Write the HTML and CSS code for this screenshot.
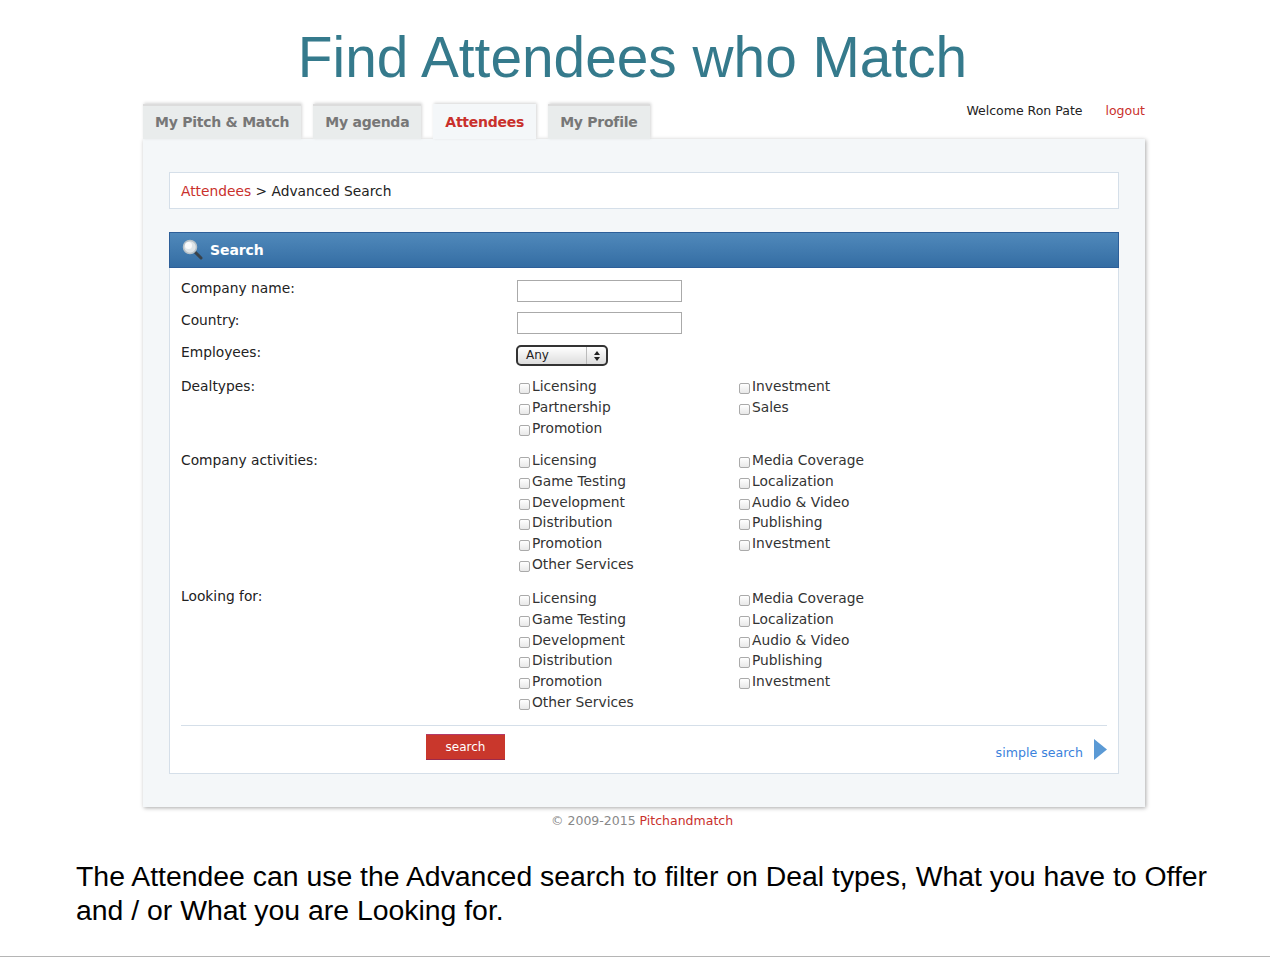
FILE: index.html
```html
<!DOCTYPE html>
<html lang="en">
<head>
<meta charset="utf-8">
<title>Find Attendees who Match</title>
<link rel="stylesheet" href="styles.css">
</head>
<body>
<div class="slide">
  <h1 class="title">Find Attendees who Match</h1>
  <div class="app">
    <div class="topbar">
      <nav class="tabs">
        <a class="tab">My Pitch &amp; Match</a>
        <a class="tab">My agenda</a>
        <a class="tab active">Attendees</a>
        <a class="tab">My Profile</a>
      </nav>
      <div class="user"><span>Welcome Ron Pate</span><a class="red">logout</a></div>
    </div>
    <div class="panel">
      <div class="crumbs"><a class="red">Attendees</a> &gt; Advanced Search</div>
      <div class="box">
        <div class="box-head">
          <svg class="mag" width="24" height="24" viewBox="0 0 24 24" aria-hidden="true">
            <line x1="14" y1="14" x2="20" y2="20" stroke="#39424a" stroke-width="3" stroke-linecap="round"/>
            <circle cx="9" cy="9" r="6.500" fill="#dfe5e8" stroke="#b9c2c8" stroke-width="1.500"/>
            <circle cx="7.500" cy="7.500" r="3.500" fill="#fff" opacity=".8"/>
          </svg>
          <span>Search</span>
        </div>
        <div class="form">
          <div class="row r-input"><label>Company name:</label><input class="text" type="text"></div>
          <div class="row r-input"><label>Country:</label><input class="text" type="text"></div>
          <div class="row r-select"><label>Employees:</label>
            <div class="select"><span class="sel-val">Any</span><span class="sel-arrows"><svg width="6" height="10" viewBox="0 0 6 10" aria-hidden="true"><path d="M3 0 6 4H0zM3 10 0 6h6z" fill="#222"/></svg></span></div>
          </div>
          <div class="row r-deal"><label>Dealtypes:</label>
            <div class="checks">
              <div class="col">
                <div class="opt"><i class="cb"></i>Licensing</div>
                <div class="opt"><i class="cb"></i>Partnership</div>
                <div class="opt"><i class="cb"></i>Promotion</div>
              </div>
              <div class="col">
                <div class="opt"><i class="cb"></i>Investment</div>
                <div class="opt"><i class="cb"></i>Sales</div>
              </div>
            </div>
          </div>
          <div class="row r-act"><label>Company activities:</label>
            <div class="checks">
              <div class="col">
                <div class="opt"><i class="cb"></i>Licensing</div>
                <div class="opt"><i class="cb"></i>Game Testing</div>
                <div class="opt"><i class="cb"></i>Development</div>
                <div class="opt"><i class="cb"></i>Distribution</div>
                <div class="opt"><i class="cb"></i>Promotion</div>
                <div class="opt"><i class="cb"></i>Other Services</div>
              </div>
              <div class="col">
                <div class="opt"><i class="cb"></i>Media Coverage</div>
                <div class="opt"><i class="cb"></i>Localization</div>
                <div class="opt"><i class="cb"></i>Audio &amp; Video</div>
                <div class="opt"><i class="cb"></i>Publishing</div>
                <div class="opt"><i class="cb"></i>Investment</div>
              </div>
            </div>
          </div>
          <div class="row r-look"><label>Looking for:</label>
            <div class="checks">
              <div class="col">
                <div class="opt"><i class="cb"></i>Licensing</div>
                <div class="opt"><i class="cb"></i>Game Testing</div>
                <div class="opt"><i class="cb"></i>Development</div>
                <div class="opt"><i class="cb"></i>Distribution</div>
                <div class="opt"><i class="cb"></i>Promotion</div>
                <div class="opt"><i class="cb"></i>Other Services</div>
              </div>
              <div class="col">
                <div class="opt"><i class="cb"></i>Media Coverage</div>
                <div class="opt"><i class="cb"></i>Localization</div>
                <div class="opt"><i class="cb"></i>Audio &amp; Video</div>
                <div class="opt"><i class="cb"></i>Publishing</div>
                <div class="opt"><i class="cb"></i>Investment</div>
              </div>
            </div>
          </div>
          <div class="actions">
            <button class="btn" type="button">search</button>
            <a class="simple">simple search</a>
            <svg class="arrow" width="13" height="21" viewBox="0 0 13 21" aria-hidden="true"><path d="M0 0 13 10.500 0 21z" fill="#5b9ad5"/></svg>
          </div>
        </div>
      </div>
    </div>
    <div class="copy">© 2009-2015 <a class="red">Pitchandmatch</a></div>
  </div>
  <p class="caption">The Attendee can use the Advanced search to filter on Deal types, What you have to Offer and / or What you are Looking for.</p>
</div>
</body>
</html>
```
FILE: styles.css
```css
* { box-sizing: border-box; }
html, body { margin: 0; padding: 0; background: #fff; }
body { font-family: "DejaVu Sans", Verdana, sans-serif; color: #222; }
.slide { width: 1270px; height: 957px; border-bottom: 1px solid #b5b5b5; overflow: hidden; display: flex; flex-direction: column; }
.title { margin: 25px 0 0; height: 77px; font: 400 56.8px/66px "Liberation Sans", Arial, sans-serif; color: #357a8c; text-align: center; padding-right: 5px; }
.app { width: 1002px; margin-left: 143px; }
.red { color: #c9302c; }
.topbar { display: flex; justify-content: space-between; height: 37px; }
.tabs { display: flex; align-items: flex-end; gap: 12px; }
.tab { height: 35px; padding: 0 12px; background: #e9ecec; border-top: 2px solid #dcdcdc; box-shadow: 1px -1px 3px #d4d4d4; font-size: 14px; font-weight: 700; line-height: 32px; color: #777; letter-spacing: -.25px; }
.tab.active { background: #f4f7f9; border-top-color: #f4f7f9; color: #c9302c; position: relative; z-index: 1; }
.user { font-size: 12.5px; line-height: 18px; display: flex; gap: 23px; color: #222; }
.panel { height: 668px; background: #f4f7f9; padding: 33px 26px 0; box-shadow: 1px 1px 4px #aaa; }
.crumbs { height: 37px; background: #fff; border: 1px solid #d5dfe9; padding-left: 11px; font-size: 13.8px; line-height: 36px; color: #222; }
.box { margin-top: 23px; height: 542px; background: #fff; border: 1px solid #d5dfe9; border-top: 0; }
.box-head { height: 36px; margin: 0 -1px; background: linear-gradient(#5089bb, #346da3); border: 1px solid #2d5f99; display: flex; align-items: center; padding-left: 11px; gap: 5px; color: #fff; font-size: 14px; font-weight: 700; letter-spacing: -.1px; }
.mag { flex: none; }
.form { padding: 12px 11px 0; }
.row { display: flex; font-size: 13.8px; line-height: 18px; }
.row label { width: 335px; flex: none; }
.r-input { height: 32px; }
.r-input label, .r-select label { margin-top: -1px; }
.text { width: 165px; height: 22px; margin-left: 1px; border: 1px solid #aaa; background: #fff; padding: 0; }
.r-select { height: 33px; }
.select { width: 92px; height: 21px; margin-top: 1px; border: 2px solid #333; border-radius: 5px; display: flex; background: linear-gradient(#fff, #ddd); font-size: 12px; line-height: 16px; }
.sel-val { flex: 1; padding-left: 8px; }
.sel-arrows { width: 20px; border-left: 1px solid #bbb; display: flex; align-items: center; justify-content: center; }
.checks { display: flex; }
.col { width: 220px; }
.opt { height: 20.8px; line-height: 18px; display: flex; color: #333; }
.cb { width: 11px; height: 11px; flex: none; margin: 6px 2px 0 3px; border: 1px solid #aaa; border-radius: 2px; background: linear-gradient(#fff, #e8e8e8); }
.r-deal { height: 74px; }
.r-act { height: 138px; }
.r-look { height: 126px; }
.r-look label { margin-top: -2px; }
.actions { position: relative; height: 47px; margin-top: 10px; border-top: 1px solid #d5dfe9; }
.btn { position: absolute; left: 245px; top: 8px; width: 79px; height: 26px; background: #c9372c; border: 0; border-top: 1px solid #b33a6a; border-bottom: 1px solid #9c2a4c; color: #fff; font: 12px/22px "DejaVu Sans", sans-serif; padding: 0; }
.simple { position: absolute; right: 24px; top: 18px; font-size: 12.6px; line-height: 18px; color: #3b82dc; }
.arrow { position: absolute; right: 0; top: 13px; }
.copy { margin-top: 5px; padding-left: 408px; font-size: 12.5px; line-height: 18px; color: #888; }
.caption { margin: 29px 0 0 76px; width: 1150px; font: 28.4px/34px "Liberation Sans", Arial, sans-serif; color: #000; }
```
